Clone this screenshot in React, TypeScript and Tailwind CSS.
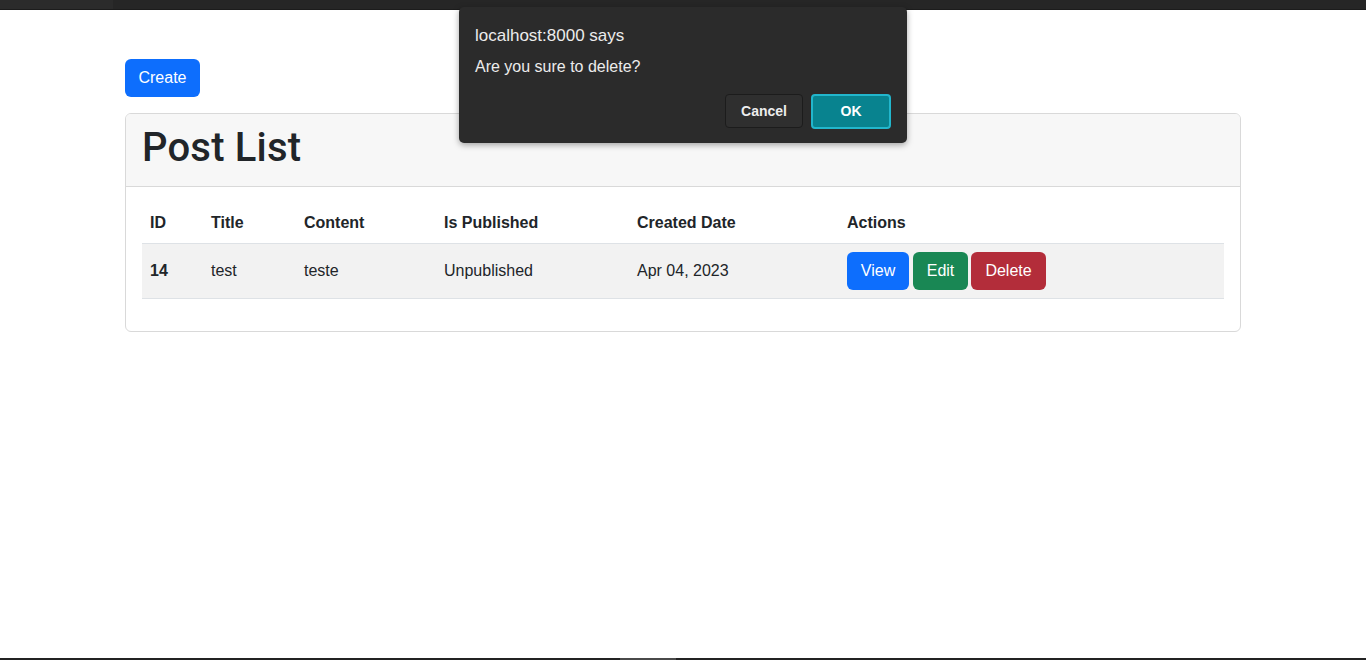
import { FC } from "react";

interface Post {
  id: number;
  title: string;
  content: string;
  is_published: boolean;
  created_at: string;
}

const posts: Post[] = [{ id: 14, title: "test", content: "teste", is_published: false, created_at: "Apr 04, 2023" }];

const font = { fontFamily: '"Liberation Sans", Arial, sans-serif' };

const ConfirmDialog: FC = () => {
  return (
    <div className="absolute left-[459px] top-[7px] w-[448px] h-[136px] rounded-[5px] bg-[#2b2b2b] shadow-[0_2px_6px_rgba(0,0,0,0.35)] px-4 pt-[18px] text-[#ececec]">
      <div className="text-[17px] leading-[22px]">localhost:8000 says</div>
      <div className="text-[16px] leading-[20px] mt-[10px]">Are you sure to delete?</div>
      <div className="flex justify-end gap-2 mt-[17px]">
        <button className="w-[78px] h-[34px] rounded-[4px] bg-[#2f2f2f] border border-[#1c1c1c] text-[14px] font-bold text-[#ededed]">Cancel</button>
        <button className="w-[80px] h-[35px] rounded-[4px] bg-[#08838f] border-2 border-[#22b6cc] text-[14px] font-bold text-white">OK</button>
      </div>
    </div>
  );
};

export default function App() {
  return (
    <div className="relative w-full h-[660px] bg-white overflow-hidden text-[#212529]" style={font}>
      <div className="h-[10px] bg-[#262626] border-b border-[#1c1c1c] flex">
        <div className="w-[113px] h-full bg-[#2b2b2b]" />
      </div>

      <div className="w-[1116px] mx-auto pt-[49px]">
        <button className="w-[75px] py-[6px] rounded-[6px] bg-[#0d6efd] text-white text-[16px] leading-[26px]">Create</button>

        <div className="mt-4 border border-[#d9d9d9] rounded-[6px] overflow-hidden">
          <div className="bg-[#f7f7f7] border-b border-[#d9d9d9] px-4 pt-[6px] pb-[10px]">
            <h1 className="text-[40px] leading-[56px] font-medium tracking-[0.2px]" style={{ fontFamily: "Roboto, sans-serif" }}>
              Post List
            </h1>
          </div>
          <div className="p-4">
            <table className="w-full mb-4 text-[16px] text-left border-collapse">
              <thead>
                <tr className="border-b border-[#dee2e6]">
                  <th className="w-[61px] px-2 py-2 leading-6 font-bold">ID</th>
                  <th className="w-[93px] px-2 py-2 leading-6 font-bold">Title</th>
                  <th className="w-[140px] px-2 py-2 leading-6 font-bold">Content</th>
                  <th className="w-[193px] px-2 py-2 leading-6 font-bold">Is Published</th>
                  <th className="w-[210px] px-2 py-2 leading-6 font-bold">Created Date</th>
                  <th className="px-2 py-2 leading-6 font-bold">Actions</th>
                </tr>
              </thead>
              <tbody>
                {posts.map((post) => (
                  <tr key={post.id} className="bg-[#f2f2f2] border-b border-[#dee2e6]">
                    <td className="px-2 py-2 font-bold">{post.id}</td>
                    <td className="px-2 py-2">{post.title}</td>
                    <td className="px-2 py-2">{post.content}</td>
                    <td className="px-2 py-2">{post.is_published ? "Published" : "Unpublished"}</td>
                    <td className="px-2 py-2">{post.created_at}</td>
                    <td className="px-2 py-2">
                      <div className="flex">
                        <button className="w-[62px] h-[38px] rounded-[6px] bg-[#0d6efd] text-white">View</button>
                        <button className="ml-[4px] w-[55px] h-[38px] rounded-[6px] bg-[#198754] text-white">Edit</button>
                        <button className="ml-[3px] w-[75px] h-[38px] rounded-[6px] bg-[#b32d3a] text-white">Delete</button>
                      </div>
                    </td>
                  </tr>
                ))}
              </tbody>
            </table>
          </div>
        </div>
      </div>

      <div className="absolute left-0 bottom-0 w-full h-[2px] bg-[#232323]">
        <div className="ml-[620px] w-[56px] h-full bg-[#4a4a4a]" />
      </div>

      <ConfirmDialog />
    </div>
  );
}
